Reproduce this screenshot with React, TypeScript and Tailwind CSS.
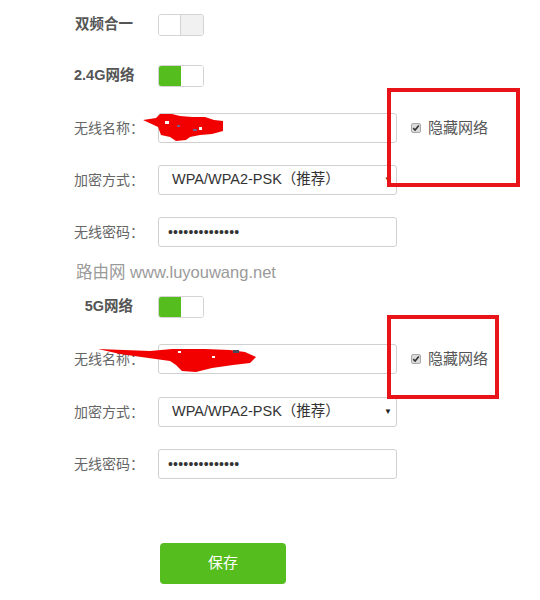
import React from 'react';

const Toggle = ({ on }: { on: boolean }) => (
    <div className="flex h-[22px] w-[46px] overflow-hidden rounded-[3px] border border-[#d4d4d4]">
        <div className={on ? 'w-[22px] bg-[#56bd1e]' : 'w-[22px] border-r border-[#d4d4d4] bg-white'} />
        <div className={on ? 'flex-1 bg-white' : 'flex-1 bg-[#f1f1f1]'} />
    </div>
);

const ToggleRow = ({ label, on, className }: { label: string; on: boolean; className?: string }) => (
    <div className={`flex h-[22px] items-center ${className ?? ''}`}>
        <div className="w-[59px] whitespace-nowrap text-right text-[14.5px] font-bold text-[#555]">{label}</div>
        <div className="ml-[25px]">
            <Toggle on={on} />
        </div>
    </div>
);

const Field = ({ label, className, children }: { label: string; className?: string; children?: React.ReactNode }) => (
    <div className={`flex h-[30px] items-center ${className ?? ''}`}>
        <div className="w-[84px] text-[14px] text-[#666]">{label}</div>
        {children}
    </div>
);

const Box = ({ children }: { children?: React.ReactNode }) => (
    <div className="relative flex h-[30px] w-[239px] items-center rounded-[3px] border border-[#d0d0d0] bg-white">
        {children}
    </div>
);

const Hidden = () => (
    <div className="ml-[14px] flex items-center">
        <div className="flex h-[10px] w-[10px] items-center justify-center rounded-[2px] border border-[#a8a8a8] bg-[#dcdcdc]">
            <svg width="8" height="8" viewBox="0 0 8 8">
                <path d="M1.2 4.2 L3.1 6 L6.8 1.6" fill="none" stroke="#333" strokeWidth="1.6" />
            </svg>
        </div>
        <span className="ml-[7px] text-[15px] text-[#555]">隐藏网络</span>
    </div>
);

const Network = ({ first }: { first: boolean }) => (
    <>
        <Field label="无线名称：" className="mt-[26px]">
            <Box />
            <Hidden />
        </Field>
        <Field label="加密方式：" className={first ? 'mt-[22px]' : 'mt-[23px]'}>
            <Box>
                <span className="ml-[13px] whitespace-nowrap text-[14.5px] text-[#333]">WPA/WPA2-PSK（推荐）</span>
                <span className="absolute right-[4px] top-[8px] text-[8px] text-[#222]">▼</span>
            </Box>
        </Field>
        <Field label="无线密码：" className="mt-[22px]">
            <Box>
                <span className="ml-[9px] text-[14px] leading-none tracking-[0.2px] text-[#333]">••••••••••••••</span>
            </Box>
        </Field>
    </>
);

export default function App() {
    return (
        <div
            className="relative h-[600px] w-[540px] overflow-hidden bg-white"
            style={{ fontFamily: '"Liberation Sans", "Noto Sans CJK SC", sans-serif' }}
        >
            <div className="flex flex-col pl-[74px] pt-[14px]">
                <ToggleRow label="双频合一" on={false} />
                <ToggleRow label="2.4G网络" on={true} className="mt-[29px]" />
                <Network first={true} />

                <div className="ml-[2px] mt-[15px] h-[20px] text-[16.5px] leading-[20px] text-[#9a9a9a]">
                    路由网 www.luyouwang.net
                </div>

                <ToggleRow label="5G网络" on={true} className="mt-[14px]" />
                <Network first={false} />

                <button className="ml-[86px] mt-[64px] h-[41px] w-[126px] rounded-[4px] bg-[#56bd1e] text-[15px] text-white">
                    保存
                </button>
            </div>

            {/* annotation boxes */}
            <div className="absolute left-[387px] top-[88px] h-[99px] w-[133px] border-4 border-[#e8141a]" />
            <div className="absolute left-[387px] top-[315px] h-[84px] w-[112px] border-4 border-[#e8141a]" />

            {/* red redaction scribbles */}
            <svg className="pointer-events-none absolute inset-0" width="540" height="600" viewBox="0 0 540 600">
                <polygon
                    fill="#f20000"
                    points="143,120 156,118 160,114 172,114 180,116 192,117 205,117 214,120 223,121 223,131 212,134 200,135 190,137 186,140 176,141 170,137 161,135 158,127"
                />
                <rect x="165" y="121" width="4" height="3" fill="#fff" />
                <rect x="177" y="125" width="3" height="2" fill="#7a5a8a" />
                <rect x="193" y="129" width="4" height="2" fill="#7a5a8a" />
                <rect x="199" y="127" width="3" height="3" fill="#fff" />
                <polygon
                    fill="#f20000"
                    points="98,349 150,351 172,349 205,349 230,350 245,352 256,357 250,363 233,365 212,368 196,372 182,371 176,365 170,361 120,354"
                />
                <rect x="233" y="350" width="6" height="3" fill="#4a4a5a" />
                <rect x="178" y="351" width="3" height="2" fill="#fff" />
                <rect x="212" y="356" width="3" height="2" fill="#fff" />
            </svg>
        </div>
    );
}
